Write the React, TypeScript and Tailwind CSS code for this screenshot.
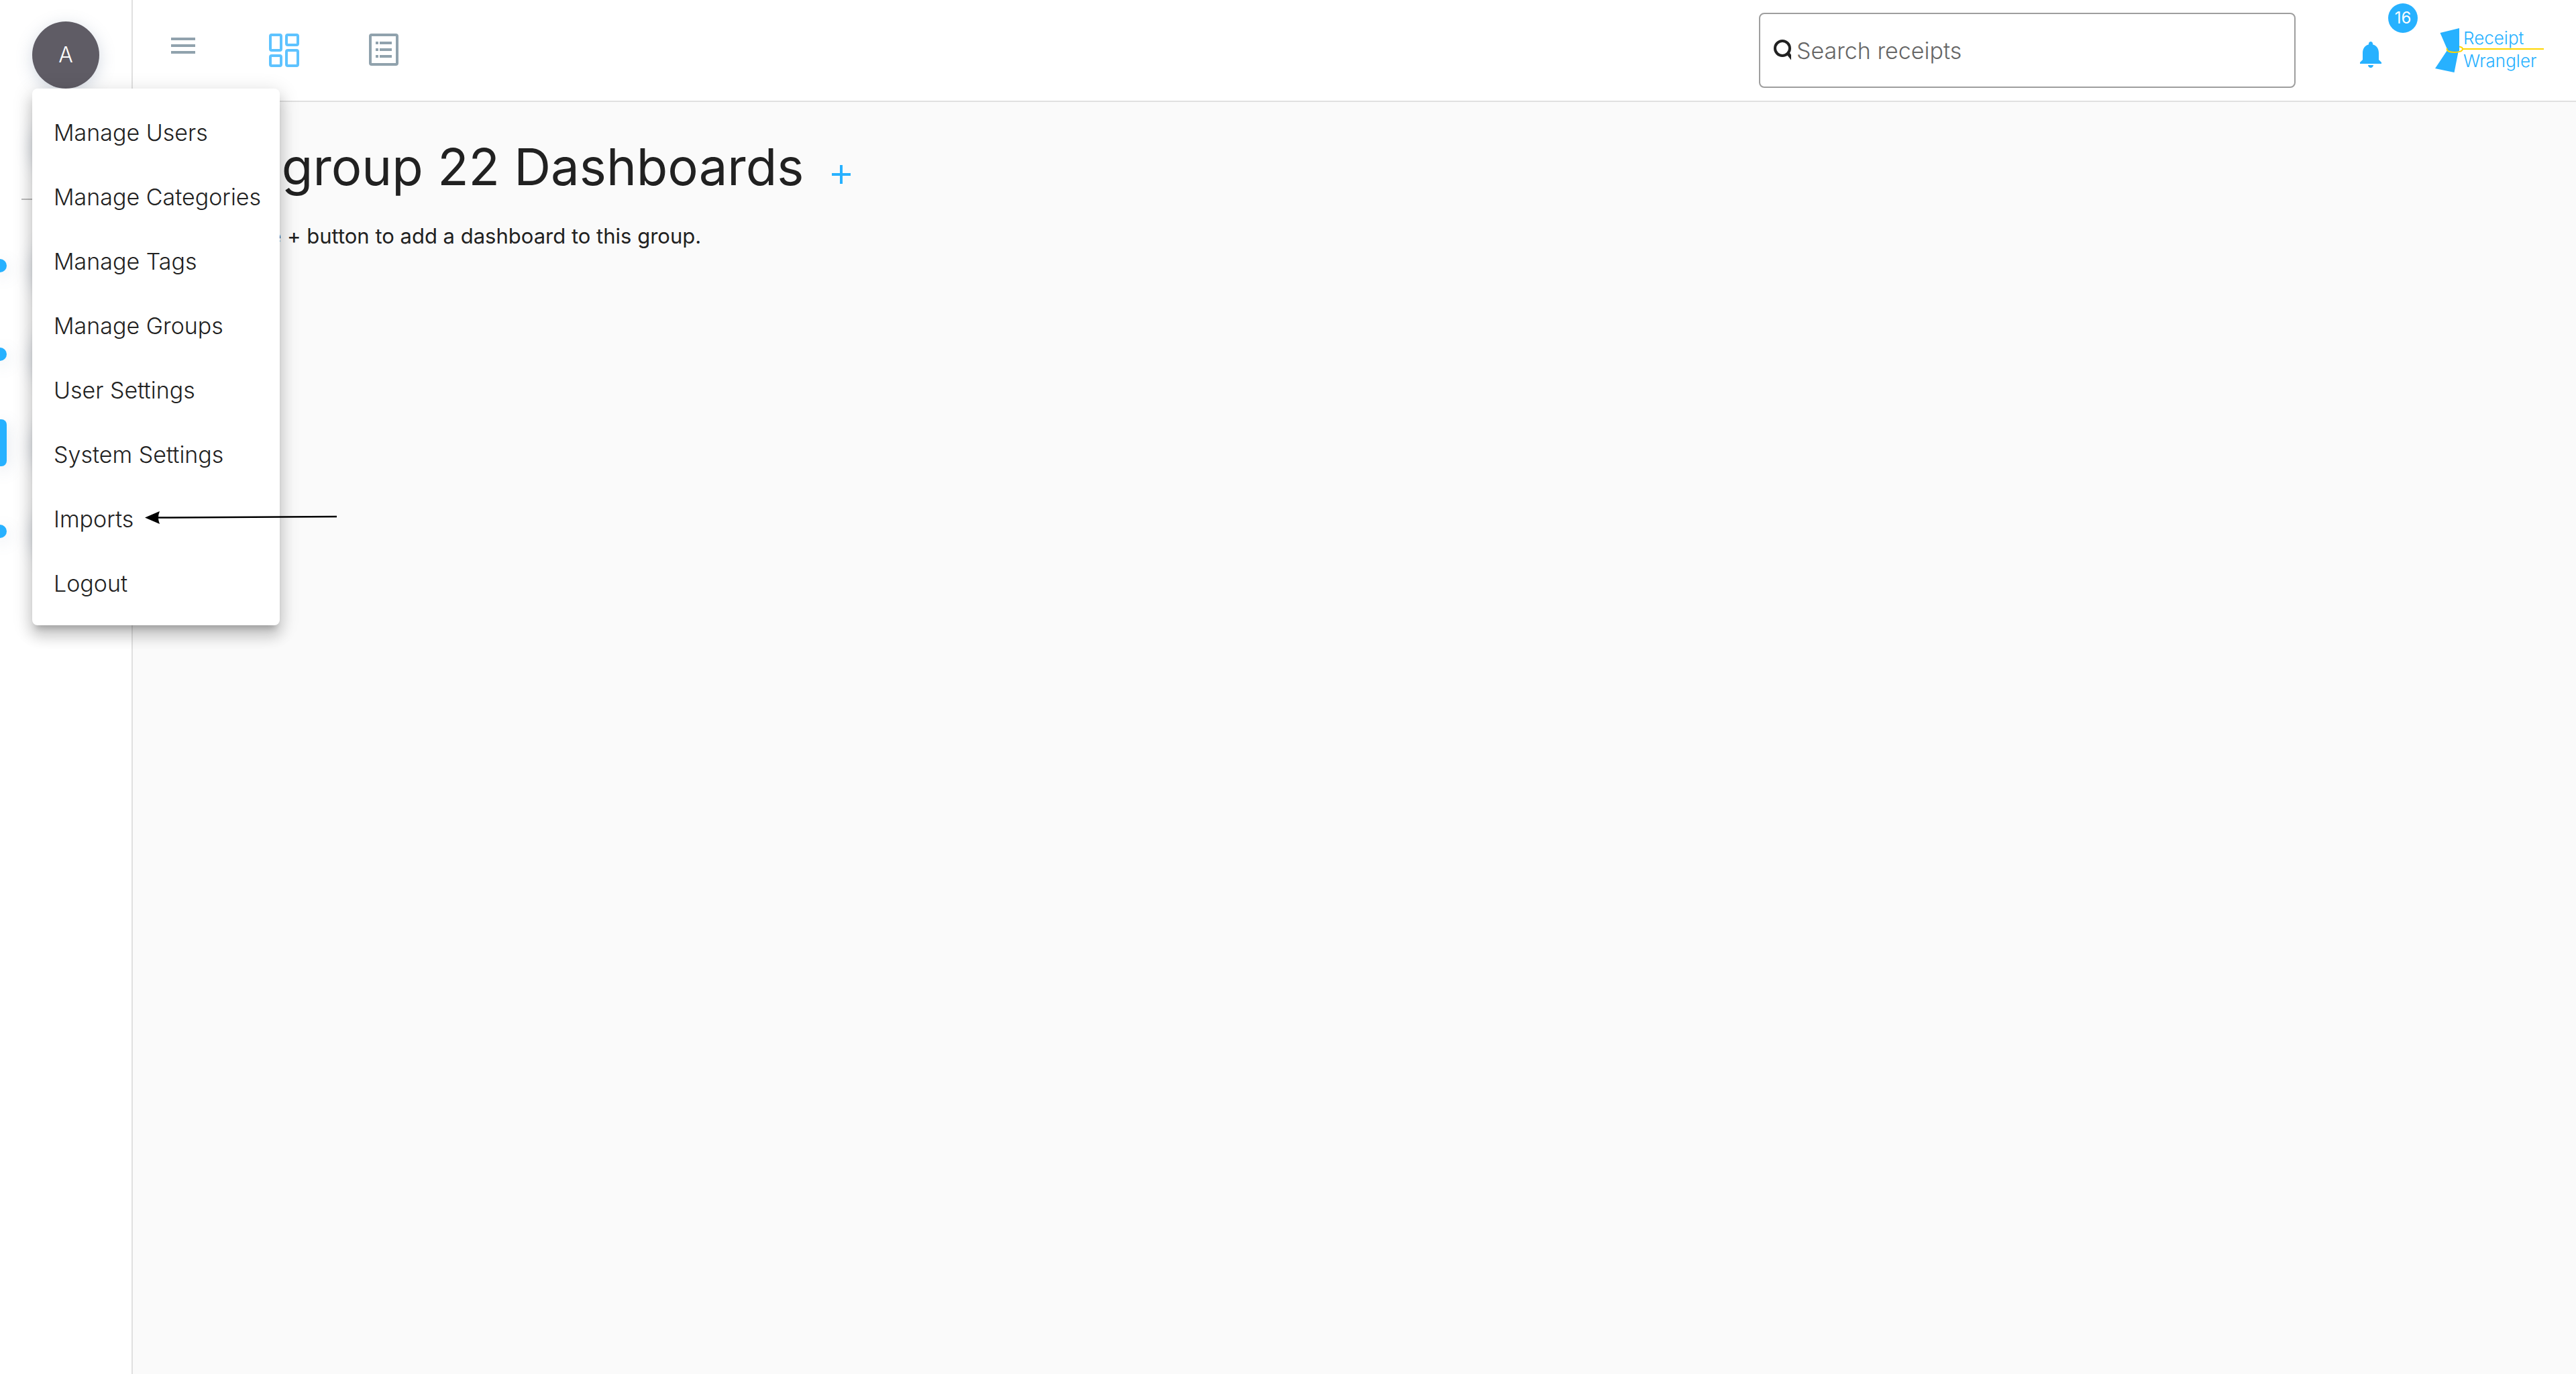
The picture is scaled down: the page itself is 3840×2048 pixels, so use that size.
const menuItems = [
  'Manage Users',
  'Manage Categories',
  'Manage Tags',
  'Manage Groups',
  'User Settings',
  'System Settings',
  'Imports',
  'Logout',
];

const groups = [
  { name: 'All', selected: false },
  { name: 'Home', selected: false },
  { name: 'Test group 22', selected: true },
  { name: 'Work', selected: false },
];

const circle = 'size-[100px] shrink-0 rounded-full shadow-[0_6px_24px_rgba(110,130,160,0.3)]';

function MenuIcon() {
  return (
    <svg className="h-[52px] w-12" viewBox="0 0 48 52" fill="#90a2ad" aria-hidden="true">
      <path d="M6 7h36v4H6zM6 17h36v4H6zM6 27h36v4H6z" />
    </svg>
  );
}

function DashboardIcon() {
  return (
    <svg className="h-[52px] w-12" viewBox="0 0 48 52" fill="none" stroke="#5ec3ff" strokeWidth="4" aria-hidden="true">
      <rect x="4" y="3" width="16" height="23" rx="2" />
      <rect x="4" y="34" width="16" height="15" rx="2" />
      <rect x="28" y="3" width="17" height="15" rx="2" />
      <rect x="28" y="26" width="17" height="23" rx="2" />
    </svg>
  );
}

function ListIcon() {
  return (
    <svg className="h-[52px] w-12" viewBox="0 0 48 52" aria-hidden="true">
      <rect x="3" y="3" width="40" height="44" rx="2" fill="none" stroke="#90a2ad" strokeWidth="4" />
      <path
        fill="#90a2ad"
        d="M11 13h4v4h-4zM17 13h18v4H17zM11 23h4v4h-4zM17 23h18v4H17zM11 33h4v4h-4zM17 33h18v4H17z"
      />
    </svg>
  );
}

function Logo() {
  return (
    <svg className="h-[70px] w-[162px]" viewBox="0 0 162 70" role="img" aria-label="Receipt Wrangler">
      <path fill="#27b1ff" d="M7.500 9 36 2V36H18L17 31zM18 35H35L28.500 68 0 62z" />
      <path
        fill="none"
        stroke="#ffd500"
        strokeWidth="2"
        d="M18 32c-2 4 4 6 11 6 7 0 12-2 12-5 0-2-2-3-5-3.500"
      />
      <path fill="#ffd500" d="M40 32h122v2H40z" />
      <text x="42" y="26" className="fill-[#27b1ff] text-[26px] font-light">Receipt</text>
      <text x="42" y="60" className="fill-[#27b1ff] text-[26px] font-light">Wrangler</text>
    </svg>
  );
}

function Arrow() {
  return (
    <svg className="pointer-events-none absolute top-9 left-[168px] h-6 w-[288px]" viewBox="0 0 288 24" aria-hidden="true">
      <path d="M20 11.500 286 10" stroke="#000" strokeWidth="2.500" />
      <path d="M0 11.500 22 2Q18 11.500 22 21z" />
    </svg>
  );
}

function UserMenu() {
  return (
    <ul
      role="menu"
      className="absolute top-[132px] left-12 z-10 w-[369px] rounded-lg bg-white py-4 shadow-[0_10px_10px_-6px_rgba(0,0,0,0.2),0_16px_20px_2px_rgba(0,0,0,0.14),0_6px_28px_4px_rgba(0,0,0,0.12)]"
    >
      {menuItems.map((item) => (
        <li key={item} role="none" className="relative">
          <button role="menuitem" className="h-24 w-full px-8 pt-0.5 text-left text-[34px] font-light whitespace-nowrap">
            {item}
          </button>
          {item === 'Imports' && <Arrow />}
        </li>
      ))}
    </ul>
  );
}

function Sidebar() {
  return (
    <aside className="flex w-[198px] shrink-0 flex-col items-center border-r-2 border-[#e0e0e0] bg-white pt-8">
      <button className={`${circle} bg-[#5f5c65] text-[32px] font-light text-white`}>A</button>
      <button aria-label="Add group" className={`${circle} mt-8 bg-[#27b1ff]`} />
      <hr className="mt-8 mb-12 w-[132px] border-t-2 border-[#bdbdbd]" />
      <nav aria-label="Groups" className="flex w-full flex-col gap-8">
        {groups.map((group) => (
          <div key={group.name} className="flex items-center gap-[38px]">
            <span
              className={`w-[10px] bg-[#27b1ff] shadow-[0_6px_24px_rgba(110,130,160,0.3)] ${
                group.selected ? 'h-[70px] rounded-r-lg' : 'h-5 rounded-r-full'
              }`}
            />
            <button aria-label={group.name} className={`${circle} bg-[#27b1ff]`} />
          </div>
        ))}
      </nav>
    </aside>
  );
}

function Header() {
  return (
    <header className="flex h-[152px] items-center border-b-2 border-[#e0e0e0] bg-white pr-12 pl-[27px]">
      <nav className="flex gap-[54px]">
        <button aria-label="Toggle sidebar" className="flex size-24 items-center justify-center"><MenuIcon /></button>
        <button aria-label="Dashboards" className="flex size-24 items-center justify-center"><DashboardIcon /></button>
        <button aria-label="Receipts" className="flex size-24 items-center justify-center"><ListIcon /></button>
      </nav>
      <label className="mr-16 ml-auto flex h-28 w-[800px] items-center gap-2 rounded-lg border-2 border-[#9e9e9e] pr-5 pl-5">
        <svg className="h-8 w-[26px] shrink-0" viewBox="0 0 26 32" fill="none" stroke="#212121" strokeWidth="4" aria-hidden="true">
          <circle cx="13" cy="13" r="11" />
          <path d="M20 19 28 29" strokeWidth="5" />
        </svg>
        <input
          type="text"
          aria-label="Search receipts"
          placeholder="Search receipts"
          className="h-full min-w-0 flex-1 bg-transparent text-[34px] font-light outline-none placeholder:text-[#666]"
        />
      </label>
      <div className="flex items-center gap-12">
        <button aria-label="Notifications, 16 unread" className="relative flex size-24 items-center justify-center pt-3">
          <svg className="size-12" viewBox="0 0 24 24" fill="#27b1ff" aria-hidden="true">
            <path d="M12 22c1.100 0 2-.9 2-2h-4c0 1.100.89 2 2 2zm6-6v-5c0-3.070-1.640-5.640-4.500-6.320V4c0-.83-.67-1.500-1.500-1.500s-1.500.67-1.500 1.500v.68C7.630 5.360 6 7.920 6 11v5l-2 2v1h16v-1l-2-2z" />
          </svg>
          <span className="absolute -top-[22px] -right-[22px] flex size-11 items-center justify-center rounded-full bg-[#27b1ff] text-2xl text-white">
            16
          </span>
        </button>
        <a href="#home"><Logo /></a>
      </div>
    </header>
  );
}

export default function App() {
  return (
    <div className="relative flex min-h-screen bg-[#fafafa] font-['Inter',sans-serif] text-[#212121]">
      <Sidebar />
      <UserMenu />
      <div className="min-w-0 flex-1">
        <Header />
        <main className="px-12 pt-12">
          <div className="flex items-center gap-8">
            <h1 className="text-[76px] leading-24">Test group 22 Dashboards</h1>
            <button aria-label="Add dashboard" className="mt-6">
              <svg className="size-12" viewBox="0 0 24 24" fill="#27b1ff" aria-hidden="true">
                <path d="M19 13h-6v6h-2v-6H5v-2h6V5h2v6h6v2z" />
              </svg>
            </button>
          </div>
          <p className="mt-8 text-[31px] leading-12">Click on the + button to add a dashboard to this group.</p>
        </main>
      </div>
    </div>
  );
}
